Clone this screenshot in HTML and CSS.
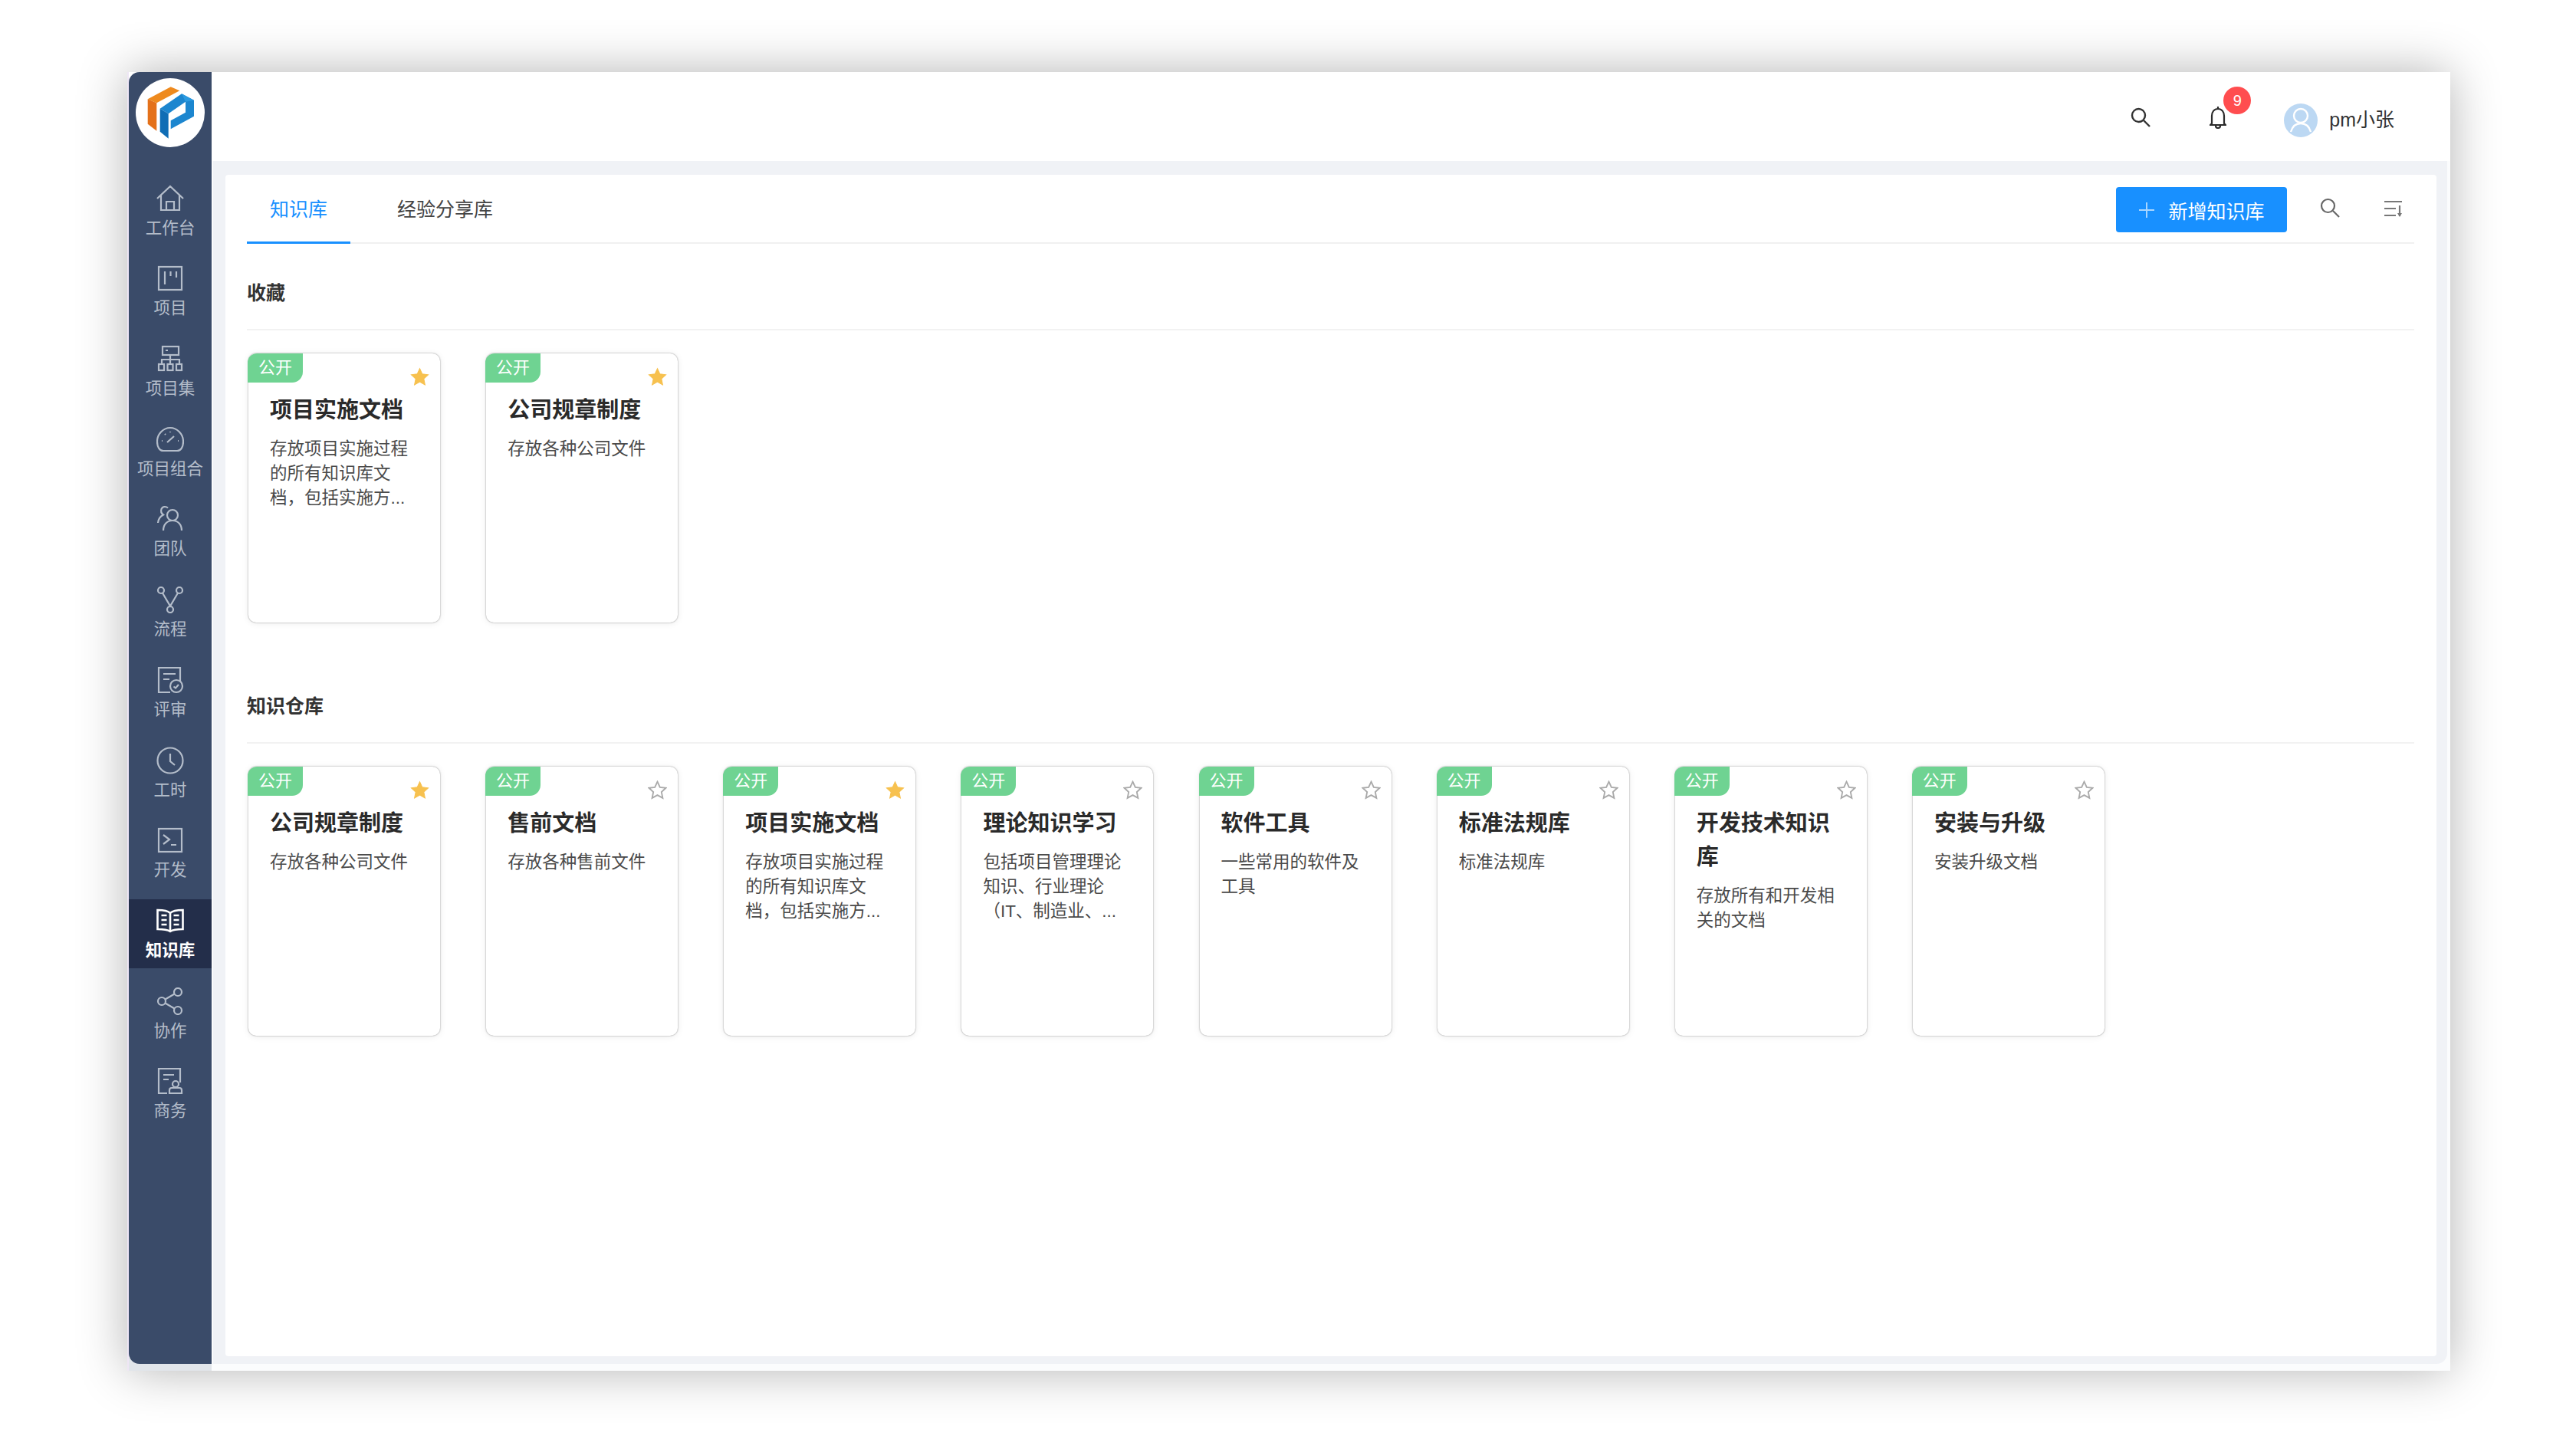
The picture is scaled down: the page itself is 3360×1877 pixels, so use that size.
FILE: index.html
```html
<!DOCTYPE html>
<html lang="zh-CN">
<head>
<meta charset="utf-8">
<title>知识库</title>
<link rel="stylesheet" href="styles.css">
</head>
<body>
<svg class="defs" width="0" height="0" aria-hidden="true">
  <symbol id="star" viewBox="0 0 24 24"><path d="M12 1.6l3.2 6.9 7.4.9-5.5 5.1 1.5 7.5L12 18.3l-6.6 3.7 1.5-7.5L1.4 9.4l7.4-.9z"/></symbol>
</svg>
<div class="frame">
  <div class="rail">
    <aside class="sidebar">
      <div class="logo">
        <svg viewBox="0 0 90 90" width="90" height="90">
          <circle cx="45" cy="45" r="45" fill="#fff"/>
          <path d="M45.7 11.3L57.3 16.3 27.3 32.3 15.7 27.3z" fill="#ee8a1e"/>
          <path d="M15.7 27.3L27.3 32.3V68.7L15.7 59.7z" fill="#e4711a"/>
          <path d="M31.7 39.7L60 20.3 76 28.7V49.7L45.7 66.3V55.3L65 44.7V30.7L42.7 46.3z" fill="#1c86cf"/>
          <path d="M31.7 39.7L42.7 46.3V78.7L31.7 69.7z" fill="#0f6db5"/>
          <path d="M60 20.3L76 28.7 65 30.7z" fill="#2a9ae0"/>
        </svg>
      </div>
      <nav class="nav">
        <a class="nav-item">
          <svg class="nav-icon" viewBox="0 0 36 36"><path d="M1 18L18 2l17 16M6 14v19h24V14M13 33V22h10v11"/></svg>
          <span>工作台</span>
        </a>
        <a class="nav-item">
          <svg class="nav-icon" viewBox="0 0 36 36"><rect x="3" y="3" width="30" height="30"/><path d="M11 9v17M18.500 9v6M26 9v8"/></svg>
          <span>项目</span>
        </a>
        <a class="nav-item">
          <svg class="nav-icon" viewBox="0 0 36 36"><rect x="8" y="2" width="21" height="11"/><path d="M12 7h3M18 13v6M7 24v-5h23v5M18 19v5"/><rect x="3" y="25" width="7" height="8"/><rect x="14.500" y="25" width="7" height="8"/><rect x="26" y="25" width="7" height="8"/></svg>
          <span>项目集</span>
        </a>
        <a class="nav-item">
          <svg class="nav-icon" viewBox="0 0 36 36"><path d="M9 33C4 33 1 28 1 21 1 11 9 3 18 3s17 8 17 18c0 7-3 12-8 12zM14 22l9-8M7 20h1M11 11l1 1M18 8v1M29 20h-1"/></svg>
          <span>项目组合</span>
        </a>
        <a class="nav-item">
          <svg class="nav-icon" viewBox="0 0 36 36"><circle cx="21" cy="13" r="7"/><path d="M9 33c0-8 5-13 12-13s12 5 12 13M15 3.500C13 1.500 8 1 6.500 5c-1 3 .5 6 2.500 7.500C5 14.500 2.500 18 2 23"/></svg>
          <span>团队</span>
        </a>
        <a class="nav-item">
          <svg class="nav-icon" viewBox="0 0 36 36"><circle cx="6" cy="6" r="4"/><circle cx="30" cy="6" r="4"/><circle cx="18" cy="31" r="4"/><path d="M8 9.500l10 17 10-17"/></svg>
          <span>流程</span>
        </a>
        <a class="nav-item">
          <svg class="nav-icon" viewBox="0 0 36 36"><path d="M18 34H3V2h28v18M9 10h16M9 17h8"/><circle cx="26" cy="26" r="8"/><path d="M22.500 26.500l2.500 2 4-4.500"/></svg>
          <span>评审</span>
        </a>
        <a class="nav-item">
          <svg class="nav-icon" viewBox="0 0 36 36"><circle cx="18" cy="18" r="16.500"/><path d="M18 9v10l6 5"/></svg>
          <span>工时</span>
        </a>
        <a class="nav-item">
          <svg class="nav-icon" viewBox="0 0 36 36"><rect x="3" y="3" width="30" height="30"/><path d="M9 11l8 6-8 6M19 24h7"/></svg>
          <span>开发</span>
        </a>
        <a class="nav-item active">
          <svg class="nav-icon" viewBox="0 0 36 36"><path d="M18 8C14 4 6 4 1.500 4v25c6 0 12 0 16.500 3 4.500-3 10.500-3 16.500-3V4C30 4 22 4 18 8zM18 8v24M6.500 11h7M6.500 17h7M6.500 23h7M22.500 11h7M22.500 17h7M22.500 23h7"/></svg>
          <span>知识库</span>
        </a>
        <a class="nav-item">
          <svg class="nav-icon" viewBox="0 0 36 36"><circle cx="7" cy="18" r="5"/><circle cx="28" cy="6" r="5"/><circle cx="28" cy="30" r="5"/><path d="M11.500 15.500L23.500 8.500M11.500 20.500l12 7"/></svg>
          <span>协作</span>
        </a>
        <a class="nav-item">
          <svg class="nav-icon" viewBox="0 0 36 36"><path d="M14 34H3V2h28v18M9 10h14M9 16h7"/><circle cx="25" cy="22" r="4"/><path d="M17 34v-4c0-2 1-3 3-3h10c2 0 3 1 3 3v4z"/></svg>
          <span>商务</span>
        </a>
      </nav>
    </aside>
  </div>
  <div class="main">
    <header class="topbar">
      <svg class="top-search" viewBox="0 0 26 26"><circle cx="10.500" cy="10.500" r="8.500"/><path d="M17 17l8 8"/></svg>
      <div class="bell-wrap">
        <svg class="bell" viewBox="0 0 22 30"><path d="M11 1v3M3 23V13c0-5 3-9 8-9s8 4 8 9v10l2 2H1zM8 26c0 2 1.500 3 3 3s3-1 3-3"/></svg>
        <span class="badge-count">9</span>
      </div>
      <div class="avatar">
        <svg viewBox="0 0 44 44"><circle cx="22" cy="16" r="9"/><path d="M9 37c2-7 7-11 13-11s11 4 13 11"/></svg>
      </div>
      <span class="user-name">pm小张</span>
    </header>
    <div class="content">
      <section class="panel">
        <div class="tabs">
          <div class="tab active">知识库</div>
          <div class="tab">经验分享库</div>
          <div class="tools">
            <button class="add-btn"><svg class="plus" viewBox="0 0 22 22"><path d="M11 1v20M1 11h20"/></svg>新增知识库</button>
            <svg class="tool-search" viewBox="0 0 26 26"><circle cx="10.500" cy="10.500" r="8.500"/><path d="M17 17l8 8"/></svg>
            <svg class="tool-sort" viewBox="0 0 25 22"><path d="M1 2h23M1 11h15M1 20h15M21 7v14"/><path class="tip" d="M18 17h6l-3 5z"/></svg>
          </div>
        </div>

        <h2 class="section-title">收藏</h2>
        <div class="cards">
          <article class="card">
            <span class="tag">公开</span>
            <svg class="star on"><use href="#star"/></svg>
            <h3>项目实施文档</h3>
            <p>存放项目实施过程的所有知识库文档，包括实施方...</p>
          </article>
          <article class="card">
            <span class="tag">公开</span>
            <svg class="star on"><use href="#star"/></svg>
            <h3>公司规章制度</h3>
            <p>存放各种公司文件</p>
          </article>
        </div>

        <h2 class="section-title second">知识仓库</h2>
        <div class="cards">
          <article class="card">
            <span class="tag">公开</span>
            <svg class="star on"><use href="#star"/></svg>
            <h3>公司规章制度</h3>
            <p>存放各种公司文件</p>
          </article>
          <article class="card">
            <span class="tag">公开</span>
            <svg class="star"><use href="#star"/></svg>
            <h3>售前文档</h3>
            <p>存放各种售前文件</p>
          </article>
          <article class="card">
            <span class="tag">公开</span>
            <svg class="star on"><use href="#star"/></svg>
            <h3>项目实施文档</h3>
            <p>存放项目实施过程的所有知识库文档，包括实施方...</p>
          </article>
          <article class="card">
            <span class="tag">公开</span>
            <svg class="star"><use href="#star"/></svg>
            <h3>理论知识学习</h3>
            <p>包括项目管理理论知识、行业理论（IT、制造业、...</p>
          </article>
          <article class="card">
            <span class="tag">公开</span>
            <svg class="star"><use href="#star"/></svg>
            <h3>软件工具</h3>
            <p>一些常用的软件及工具</p>
          </article>
          <article class="card">
            <span class="tag">公开</span>
            <svg class="star"><use href="#star"/></svg>
            <h3>标准法规库</h3>
            <p>标准法规库</p>
          </article>
          <article class="card">
            <span class="tag">公开</span>
            <svg class="star"><use href="#star"/></svg>
            <h3>开发技术知识库</h3>
            <p>存放所有和开发相关的文档</p>
          </article>
          <article class="card">
            <span class="tag">公开</span>
            <svg class="star"><use href="#star"/></svg>
            <h3>安装与升级</h3>
            <p>安装升级文档</p>
          </article>
        </div>
      </section>
    </div>
  </div>
</div>
</body>
</html>
```
FILE: styles.css
```css
* { box-sizing: border-box; }
html, body { margin: 0; height: 100%; }
body {
  background: #fff;
  padding: 94px 0 0 166px;
  font-family: "Liberation Sans", "Noto Sans CJK SC", sans-serif;
  color: #333;
  overflow: hidden;
}
.defs { position: absolute; }

.frame {
  display: flex;
  width: 3030px;
  height: 1694px;
  background: #fbfcfd;
  box-shadow: 0 0 60px rgba(0, 0, 0, .3);
}

.rail {
  width: 110px;
  flex: none;
  padding-bottom: 9px;
  border-left: 2px solid #eee6f5;
  background: linear-gradient(to bottom, #fff 0, #fff 99%, #e1e5ea 99%);
}
.sidebar {
  height: 100%;
  padding-top: 8px;
  background: #3a4b69;
  border-radius: 14px 0 0 14px;
}
.logo { display: flex; justify-content: center; height: 90px; }
.nav {
  display: flex;
  flex-direction: column;
  gap: 14.7px;
  margin-top: 38.7px;
}
.nav-item {
  display: flex;
  flex-direction: column;
  align-items: center;
  height: 90px;
  padding-top: 10px;
  color: #b4bdca;
  font-size: 21.5px;
  line-height: 28px;
}
.nav-item span { margin-top: 7px; }
.nav-icon {
  width: 36px;
  height: 36px;
  fill: none;
  stroke: #b4bdca;
  stroke-width: 2.2;
}
.nav-item.active { background: #232e4a; color: #fff; font-weight: 700; }
.nav-item.active .nav-icon { stroke: #fff; stroke-width: 2.6; }

.main { flex: 1; display: flex; flex-direction: column; min-width: 0; }
.topbar {
  height: 116px;
  flex: none;
  display: flex;
  align-items: center;
  padding-right: 73px;
  background: #fff;
  justify-content: flex-end;
}
.top-search {
  width: 26px;
  height: 26px;
  margin: 2px 77px 0 0;
  fill: none;
  stroke: #333;
  stroke-width: 2.4;
}
.bell-wrap { position: relative; width: 22px; height: 30px; margin: 2px 75px 0 0; }
.bell { display: block; width: 22px; height: 30px; fill: none; stroke: #2b2b2b; stroke-width: 2.2; }
.badge-count {
  position: absolute;
  left: 18px;
  top: -25px;
  width: 36px;
  height: 36px;
  border-radius: 50%;
  background: #ff4d4f;
  color: #fff;
  font-size: 20px;
  line-height: 36px;
  text-align: center;
}
.avatar {
  width: 44px;
  height: 44px;
  margin: 10px 15px 0 0;
  border-radius: 50%;
  background: #bcd8f3;
  overflow: hidden;
}
.avatar svg { display: block; fill: none; stroke: #fff; stroke-width: 2.4; }
.user-name { margin-top: 7px; font-size: 25px; line-height: 32px; color: #333; white-space: nowrap; }

.content {
  flex: 1;
  min-height: 0;
  margin: 0 4px 9px 2px;
  padding: 18px 14px 10px 16px;
  background: #f0f2f6;
  border-radius: 0 0 14px 0;
}
.panel {
  height: 100%;
  padding: 0 29px 0 28px;
  background: #fff;
  border-radius: 4px;
}

.tabs {
  display: flex;
  height: 90px;
  border-bottom: 2px solid #f0f0f0;
}
.tab {
  height: 90px;
  padding: 27px 30px 0;
  font-size: 25px;
  line-height: 36px;
  color: #444;
}
.tab + .tab { margin-left: 31px; }
.tab.active { color: #1890ff; border-bottom: 3px solid #1890ff; }
.tools {
  margin-left: auto;
  display: flex;
  align-items: flex-start;
  padding-top: 16px;
  padding-right: 15px;
}
.add-btn {
  display: flex;
  align-items: center;
  justify-content: center;
  width: 223px;
  height: 59px;
  padding: 0;
  border: 0;
  border-radius: 4px;
  background: #1890ff;
  color: #fff;
  font: inherit;
  font-size: 25px;
}
.plus { width: 22px; height: 22px; margin-right: 17px; fill: none; stroke: #a9d6ff; stroke-width: 2; }
.tool-search {
  width: 26px;
  height: 26px;
  margin: 14px 0 0 43px;
  fill: none;
  stroke: #666;
  stroke-width: 2.2;
}
.tool-sort {
  width: 25px;
  height: 22px;
  margin: 17px 0 0 57px;
  fill: none;
  stroke: #777;
  stroke-width: 2.2;
}
.tool-sort .tip { fill: #777; stroke: none; }

.section-title {
  display: flex;
  align-items: center;
  height: 100px;
  margin: 13px 0 0;
  border-bottom: 2px solid #f2f2f2;
  font-size: 25px;
  font-weight: 700;
  color: #333;
}
.section-title.second { margin-top: 58px; }

.cards {
  display: flex;
  gap: 60.14px;
  margin-top: 30px;
  padding-left: 2px;
}
.card {
  position: relative;
  width: 250px;
  height: 351px;
  flex: none;
  padding: 52px 29px 0 28px;
  border-radius: 10px;
  background: #fff;
  box-shadow: 0 0 2px rgba(0, 0, 0, .46), 0 1px 10px rgba(0, 0, 0, .08);
}
.card h3 {
  margin: 0;
  font-size: 29px;
  font-weight: 700;
  line-height: 44px;
  color: #2a2a2a;
}
.card p {
  margin: 13px 0 0;
  font-size: 22.5px;
  line-height: 32px;
  color: #4a4a4a;
}
.tag {
  position: absolute;
  left: -1px;
  top: 0;
  width: 72px;
  height: 38px;
  border-radius: 12px 0 14px 0;
  background: #6fd392;
  color: #fff;
  font-size: 22px;
  line-height: 38px;
  text-align: center;
}
.star {
  position: absolute;
  right: 14px;
  top: 18px;
  width: 25px;
  height: 25px;
  fill: none;
  stroke: #aaa;
  stroke-width: 1.8;
}
.star.on { fill: #f7c14f; stroke: #f7c14f; stroke-width: 1; }
```
